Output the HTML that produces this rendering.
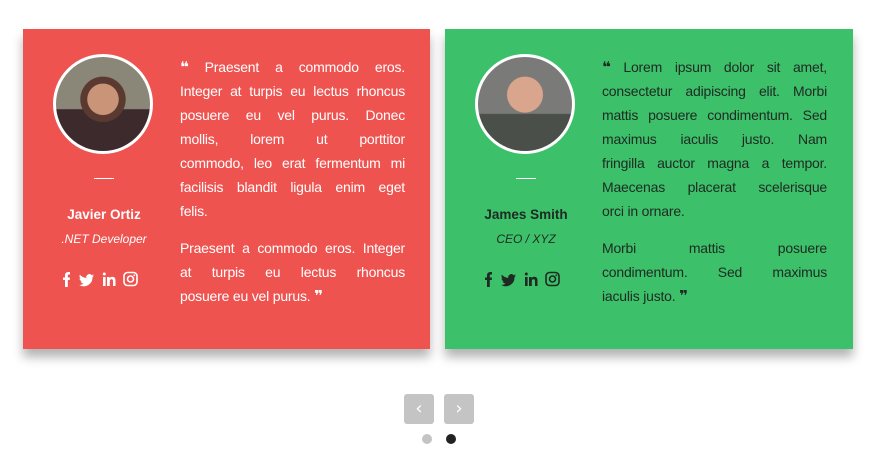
<!DOCTYPE html>
<html><head><meta charset="utf-8"><style>
body{margin:0;width:876px;height:459px;background:#fff;font-family:"Liberation Sans",sans-serif;position:relative;overflow:hidden}
.card{position:absolute;top:29px;width:407px;height:320px;box-shadow:0 8px 10px rgba(0,0,0,.3)}
.c1{left:23px;background:#ee5350;color:#fff}
.c2{left:445px;width:408px;background:#3cc06a;color:#1e2a22}
.av{position:absolute;left:30px;top:25px;width:94px;height:94px;border-radius:50%;border:3px solid #fff;overflow:hidden}
.line{position:absolute;left:71px;top:149px;width:20px;height:1px}
.name{position:absolute;left:0;width:162px;top:178px;text-align:center;font-weight:bold;font-size:13.5px}
.role{position:absolute;left:0;width:162px;top:203px;text-align:center;font-style:italic;font-size:12px}
.ic{position:absolute;left:37px;top:242px}
.txt{position:absolute;left:157px;width:225px;top:26px;font-size:14px;line-height:24px;letter-spacing:-.2px}
.txt div{text-align:justify;text-align-last:justify;white-space:nowrap}
.txt div.l{text-align-last:left}
.gap{height:13px}
.q{font-weight:bold;font-family:"DejaVu Sans";font-size:15px}
.btn{position:absolute;top:394px;width:30px;height:30px;background:#c4c4c4;border-radius:3px;color:#fff;font-size:18px;text-align:center;line-height:29px;font-family:"DejaVu Sans"}
.dot{position:absolute;top:434px;width:10px;height:10px;border-radius:50%}
</style></head><body>
<div class="card c1">
<div class="av" style="background:radial-gradient(circle at 50% 45%,#c99478 0 22%,#5a3a30 23% 32%,transparent 33%),linear-gradient(#8a8678 0 55%,#3d2a2c 56%)"></div>
<div class="line" style="background:#fff"></div>
<div class="name">Javier Ortiz</div>
<div class="role">.NET Developer</div>
<svg class="ic" width="90" height="16" viewBox="0 0 90 16" fill="#fff"><path d="M5 16V9H3V6.5h2V4.5C5 2.5 6 1 8.5 1H10v2.5H9c-1 0-1.2.4-1.2 1.2v1.8H10L9.7 9H7.8v7z"/><g transform="translate(2 0)"><path d="M32 4.5c-.6.3-1.2.4-1.8.5.7-.4 1.1-1 1.4-1.7-.6.4-1.3.6-2 .8a3.1 3.1 0 0 0-5.3 2.8A8.8 8.8 0 0 1 17.9 3.6a3.1 3.1 0 0 0 1 4.1c-.5 0-1-.2-1.4-.4 0 1.5 1.1 2.8 2.5 3-.5.2-1 .2-1.4.1.4 1.2 1.5 2.1 2.9 2.2A6.2 6.2 0 0 1 17 13.9a8.800 8.800 0 0 0 13.500-7.800c.6-.4 1.100-1 1.500-1.600z"/></g><g transform="translate(5 0)"><path d="M38 6h2.600v9H38zM39.300 1.500a1.500 1.500 0 1 1 0 3 1.500 1.500 0 0 1 0-3zM42 6h2.500v1.200c.4-.7 1.300-1.400 2.700-1.400 2.800 0 3.300 1.800 3.300 4.200V15H48v-4.400c0-1 0-2.400-1.500-2.400s-1.700 1.100-1.700 2.300V15H42z"/></g><g transform="translate(9 0)"><rect x="55" y="1.500" width="13" height="13" rx="3.500" fill="none" stroke="#fff" stroke-width="1.600"/><circle cx="61.500" cy="8" r="3" fill="none" stroke="#fff" stroke-width="1.600"/><circle cx="65.300" cy="4.300" r=".9"/></g></svg>
<div class="txt">
<div><span class="q">❝</span> Praesent a commodo eros.</div>
<div>Integer at turpis eu lectus rhoncus</div>
<div>posuere eu vel purus. Donec</div>
<div>mollis, lorem ut porttitor</div>
<div>commodo, leo erat fermentum mi</div>
<div>facilisis blandit ligula enim eget</div>
<div class="l">felis.</div>
<div class="gap"></div>
<div>Praesent a commodo eros. Integer</div>
<div>at turpis eu lectus rhoncus</div>
<div class="l">posuere eu vel purus. <span class="q">❞</span></div>
</div>
</div>
<div class="card c2">
<div class="av" style="background:radial-gradient(circle at 50% 40%,#d9a58c 0 24%,transparent 25%),linear-gradient(#7a7a78 0 60%,#4b4f4a 61%)"></div>
<div class="line" style="background:#fff"></div>
<div class="name">James Smith</div>
<div class="role">CEO / XYZ</div>
<svg class="ic" width="90" height="16" viewBox="0 0 90 16" fill="#1e2a22"><path d="M5 16V9H3V6.5h2V4.5C5 2.5 6 1 8.5 1H10v2.5H9c-1 0-1.2.4-1.2 1.2v1.8H10L9.7 9H7.8v7z"/><g transform="translate(2 0)"><path d="M32 4.5c-.6.3-1.2.4-1.8.5.7-.4 1.1-1 1.4-1.7-.6.4-1.3.6-2 .8a3.1 3.1 0 0 0-5.3 2.8A8.8 8.8 0 0 1 17.9 3.6a3.1 3.1 0 0 0 1 4.1c-.5 0-1-.2-1.4-.4 0 1.5 1.1 2.8 2.5 3-.5.2-1 .2-1.4.1.4 1.2 1.5 2.1 2.9 2.2A6.2 6.2 0 0 1 17 13.9a8.800 8.800 0 0 0 13.500-7.800c.6-.4 1.100-1 1.500-1.600z"/></g><g transform="translate(5 0)"><path d="M38 6h2.600v9H38zM39.300 1.500a1.500 1.500 0 1 1 0 3 1.500 1.500 0 0 1 0-3zM42 6h2.500v1.200c.4-.7 1.300-1.400 2.700-1.400 2.800 0 3.300 1.800 3.300 4.200V15H48v-4.400c0-1 0-2.400-1.500-2.400s-1.700 1.100-1.700 2.300V15H42z"/></g><g transform="translate(9 0)"><rect x="55" y="1.500" width="13" height="13" rx="3.500" fill="none" stroke="#1e2a22" stroke-width="1.600"/><circle cx="61.500" cy="8" r="3" fill="none" stroke="#1e2a22" stroke-width="1.600"/><circle cx="65.300" cy="4.300" r=".9"/></g></svg>
<div class="txt">
<div><span class="q">❝</span> Lorem ipsum dolor sit amet,</div>
<div>consectetur adipiscing elit. Morbi</div>
<div>mattis posuere condimentum. Sed</div>
<div>maximus iaculis justo. Nam</div>
<div>fringilla auctor magna a tempor.</div>
<div>Maecenas placerat scelerisque</div>
<div class="l">orci in ornare.</div>
<div class="gap"></div>
<div>Morbi mattis posuere</div>
<div>condimentum. Sed maximus</div>
<div class="l">iaculis justo. <span class="q">❞</span></div>
</div>
</div>
<div class="btn" style="left:404px">‹</div>
<div class="btn" style="left:444px">›</div>
<div class="dot" style="left:422px;background:#c4c4c4"></div>
<div class="dot" style="left:446px;background:#222"></div>
</body></html>
